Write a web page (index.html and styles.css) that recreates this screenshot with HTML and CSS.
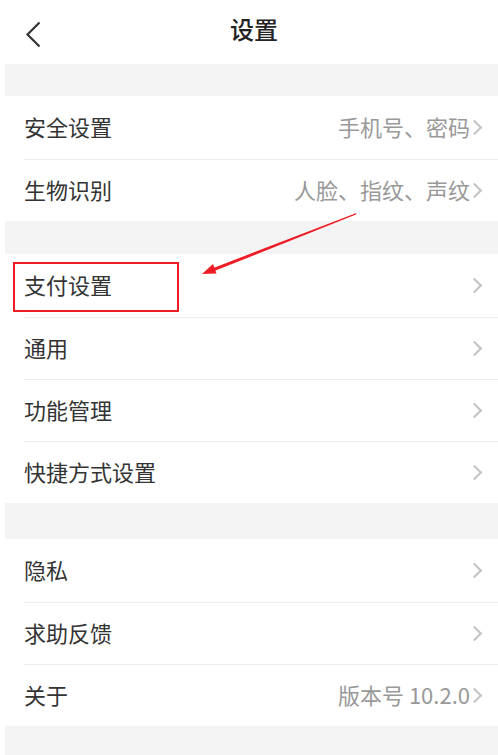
FILE: index.html
```html
<!DOCTYPE html>
<html lang="zh-CN">
<head>
<meta charset="utf-8">
<title>设置</title>
<link rel="stylesheet" href="styles.css">
</head>
<body>
<div class="page">
  <header class="nav">
    <span class="back">
      <svg width="16" height="27" viewBox="0 0 16 27"><path d="M14.5 1.5 L2.5 13.5 L14.5 25.5" fill="none" stroke="#333" stroke-width="2.2" stroke-linejoin="miter"/></svg>
    </span>
    <h1 class="title">设置</h1>
  </header>
  <div class="content">
    <div class="gap g1"></div>
    <ul class="group">
      <li class="row"><span class="label">安全设置</span><span class="value">手机号、密码</span><i class="chev"></i></li>
      <li class="row"><span class="label">生物识别</span><span class="value">人脸、指纹、声纹</span><i class="chev"></i></li>
    </ul>
    <div class="gap g2"></div>
    <ul class="group">
      <li class="row"><span class="label">支付设置</span><i class="chev"></i></li>
      <li class="row"><span class="label">通用</span><i class="chev"></i></li>
      <li class="row"><span class="label">功能管理</span><i class="chev"></i></li>
      <li class="row"><span class="label">快捷方式设置</span><i class="chev"></i></li>
    </ul>
    <div class="gap g3"></div>
    <ul class="group">
      <li class="row"><span class="label">隐私</span><i class="chev"></i></li>
      <li class="row"><span class="label">求助反馈</span><i class="chev"></i></li>
      <li class="row"><span class="label">关于</span><span class="value">版本号 10.2.0</span><i class="chev"></i></li>
    </ul>
    <div class="gap g4"></div>
  </div>
  <div class="mark-box"></div>
  <svg class="mark-arrow" width="498" height="755" viewBox="0 0 498 755">
    <polygon points="356.5,213 356,214.6 213,271.5 212,268.5" fill="#ee1c25"/>
    <polygon points="202,274 213,264 216.5,273.5" fill="#ee1c25"/>
  </svg>
</div>
</body>
</html>
```

FILE: styles.css
```css
html, body {
  margin: 0;
  padding: 0;
  background: #ffffff;
}
body {
  font-family: "Noto Sans CJK SC", "Noto Sans", sans-serif;
  color: #333333;
}
.page {
  position: relative;
  width: 498px;
  height: 755px;
  overflow: hidden;
}
.nav {
  height: 64px;
  display: flex;
  align-items: center;
  justify-content: center;
  position: relative;
}
.back {
  position: absolute;
  left: 25px;
  top: 21px;
  display: block;
  width: 16px;
  height: 27px;
}
.back svg { display: block; }
.title {
  margin: 0;
  font-size: 24px;
  font-weight: 500;
  color: #222;
  line-height: 1;
  padding-bottom: 6px;
  padding-left: 10px;
}
.content {
  margin-left: 5px;
  background: #f4f4f4;
}
.gap { height: 32px; }
.g2 { height: 33px; }
.g3 { height: 36px; }
.g4 { height: 40px; }
.group {
  list-style: none;
  margin: 0;
  padding: 0 0 0 19px;
  background: #fff;
}
.row {
  height: 58px;
  padding-bottom: 3px;
  display: flex;
  align-items: center;
  padding-right: 15px;
  border-top: 1px solid #eeeeee;
}
.row:first-child { border-top: none; height: 60px; }
.label {
  font-size: 22px;
  color: #333;
  flex: 1;
  line-height: 1;
}
.value {
  font-size: 22px;
  color: #999;
  line-height: 1;
}
.chev {
  display: block;
  width: 9px;
  height: 9px;
  border-top: 2px solid #c4c4c4;
  border-right: 2px solid #c4c4c4;
  transform: rotate(45deg);
  margin-left: -1px;
  margin-right: 3px;
  margin-top: 3px;
}
.mark-box {
  position: absolute;
  left: 13px;
  top: 262px;
  width: 162px;
  height: 46px;
  border: 2px solid #ee1c25;
}
.mark-arrow {
  position: absolute;
  left: 0;
  top: 0;
  pointer-events: none;
}
```
